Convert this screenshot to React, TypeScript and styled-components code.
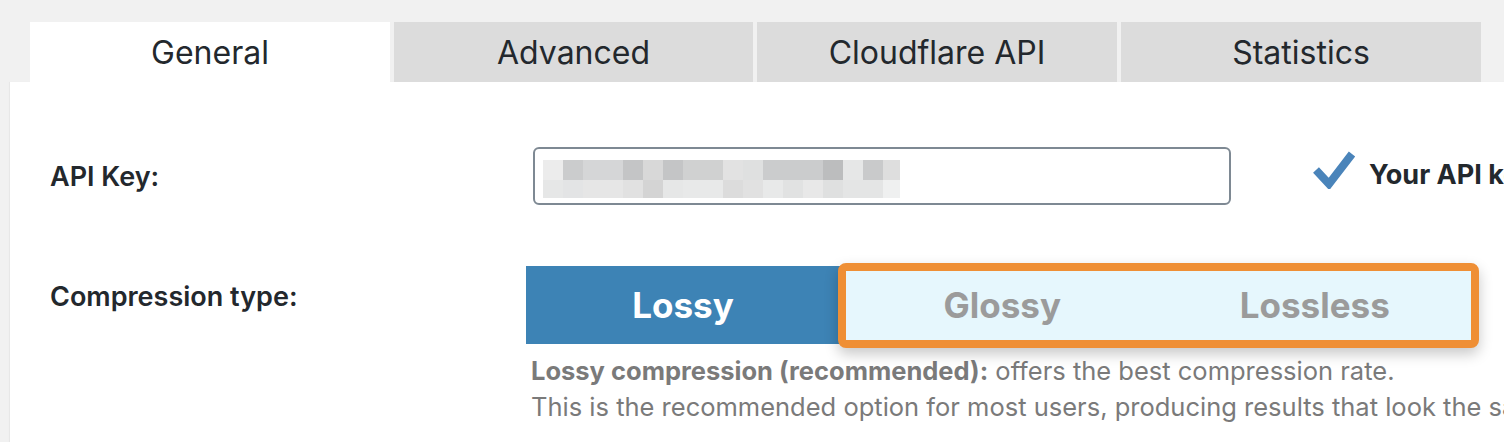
import React from 'react';
import styled, { createGlobalStyle } from 'styled-components';

const GlobalStyle = createGlobalStyle`
  html, body {
    margin: 0;
    padding: 0;
    background: #f1f1f1;
    overflow: hidden;
  }
  body {
    font-family: Inter, "Noto Sans", "Liberation Sans", sans-serif;
    color: #23282d;
  }
`;

const Page = styled.div`
  width: 1504px;
  height: 442px;
  padding: 22px 0 0 10px;
  box-sizing: border-box;
  overflow: hidden;
`;

const TabBar = styled.div`
  display: flex;
  gap: 4px;
  padding-left: 20px;
`;

const Tab = styled.div<{ $active?: boolean }>`
  flex: 0 0 360px;
  height: 60px;
  display: flex;
  align-items: center;
  justify-content: center;
  font-size: 32px;
  color: #23282d;
  background: ${(p) => (p.$active ? '#ffffff' : '#dcdcdc')};
  &:nth-child(2) { flex-basis: 359px; }
`;

const Panel = styled.div`
  width: 1520px;
  height: 360px;
  background: #ffffff;
  box-shadow: -1px 0 1px rgba(0, 0, 0, 0.04);
  padding: 65px 0 0 40px;
  box-sizing: border-box;
`;

const Row = styled.div<{ $gap?: number }>`
  display: flex;
  align-items: flex-start;
  margin-bottom: ${(p) => p.$gap ?? 0}px;
`;

const Label = styled.div<{ $top: number }>`
  flex: 0 0 476px;
  padding-top: ${(p) => p.$top}px;
  font-size: 27px;
  line-height: 32px;
  font-weight: 600;
  color: #23282d;
`;

const KeyBox = styled.div`
  flex: 0 0 698px;
  margin-left: 7px;
  height: 58px;
  box-sizing: border-box;
  border: 2px solid #7e8993;
  border-radius: 6px;
  padding: 11px 0 0 8px;
`;

const Valid = styled.div`
  display: flex;
  align-items: flex-start;
  gap: 13px;
  margin-left: 81px;
  padding-top: 2px;
  white-space: nowrap;
`;

const ValidText = styled.span`
  padding-top: 9px;
  font-size: 27px;
  line-height: 34px;
  font-weight: 700;
  color: #23282d;
`;

const Content = styled.div`
  display: flex;
  flex-direction: column;
`;

const ButtonGroup = styled.div`
  display: flex;
  align-items: center;
  height: 78px;
`;

const TypeButton = styled.div<{ $selected?: boolean; $width?: number }>`
  flex: ${(p) => (p.$width ? `0 0 ${p.$width}px` : '1 1 0')};
  height: 100%;
  display: flex;
  align-items: center;
  justify-content: center;
  font-size: 35px;
  font-weight: 700;
  color: ${(p) => (p.$selected ? '#ffffff' : '#9b9b9b')};
  background: ${(p) => (p.$selected ? '#3d83b5' : '#e6f7fd')};
`;

const Highlight = styled.div`
  display: flex;
  flex: 0 0 641px;
  height: 85px;
  margin-left: -2px;
  box-sizing: border-box;
  border: 8px solid #ef8f35;
  border-radius: 8px;
  background: #e6f7fd;
  box-shadow: 0 6px 14px rgba(0, 0, 0, 0.22);
  position: relative;
`;

const Description = styled.div`
  margin-top: 9px;
  padding-left: 5px;
  font-size: 25.5px;
  line-height: 36px;
  color: #7a7a7a;
  white-space: nowrap;
  b { font-weight: 700; }
`;

const top = ['ececec', 'cbcccd', 'd5d6d7', 'd5d6d7', 'c4c5c6', 'd8d8d8', 'c4c5c6', 'd0d1d1', 'd0d1d1', 'e2e2e2', 'dfe0e0', 'cbcccd', 'cbcccd', 'cbcccd', 'bcbdbe', 'e6e7e7', 'c9cacb', 'dedede'];
const bottom = ['e6e7e7', 'e3e4e5', 'e6e6e6', 'e6e6e6', 'e1e1e1', 'd4d4d4', 'e6e7e7', 'e8e9e9', 'e8e9e9', 'dcdcdc', 'e1e1e1', 'e8e9e9', 'e1e2e2', 'e8e8e8', 'dfe0e0', 'e4e5e5', 'e4e5e5', 'eff0f0'];

const Pixelated = () => (
  <svg width="357" height="38" viewBox="0 0 357 38">
    {top.map((c, i) => (
      <rect key={`t${i}`} x={i * 20} y={0} width={20} height={20} fill={`#${c}`} />
    ))}
    {bottom.map((c, i) => (
      <rect key={`b${i}`} x={i * 20} y={20} width={20} height={18} fill={`#${c}`} />
    ))}
  </svg>
);

const Check = () => (
  <svg width="44" height="40" viewBox="0 0 44 40">
    <path d="M4 21 L17 35 L40 5" fill="none" stroke="#4a84ba" strokeWidth="8" strokeLinejoin="miter" />
  </svg>
);

export default function App() {
  return (
    <>
      <GlobalStyle />
      <Page>
        <TabBar>
          <Tab $active>General</Tab>
          <Tab>Advanced</Tab>
          <Tab>Cloudflare API</Tab>
          <Tab>Statistics</Tab>
        </TabBar>
        <Panel>
          <Row $gap={61}>
            <Label $top={14}>API Key:</Label>
            <KeyBox>
              <Pixelated />
            </KeyBox>
            <Valid>
              <Check />
              <ValidText>Your API key is valid.</ValidText>
            </Valid>
          </Row>
          <Row>
            <Label $top={15}>Compression type:</Label>
            <Content>
              <ButtonGroup>
                <TypeButton $selected $width={314}>Lossy</TypeButton>
                <Highlight>
                  <TypeButton>Glossy</TypeButton>
                  <TypeButton>Lossless</TypeButton>
                </Highlight>
              </ButtonGroup>
              <Description>
                <div><b>Lossy compression (recommended):</b> offers the best compression rate.</div>
                <div>This is the recommended option for most users, producing results that look the same as the original to the human eye.</div>
              </Description>
            </Content>
          </Row>
        </Panel>
      </Page>
    </>
  );
}
